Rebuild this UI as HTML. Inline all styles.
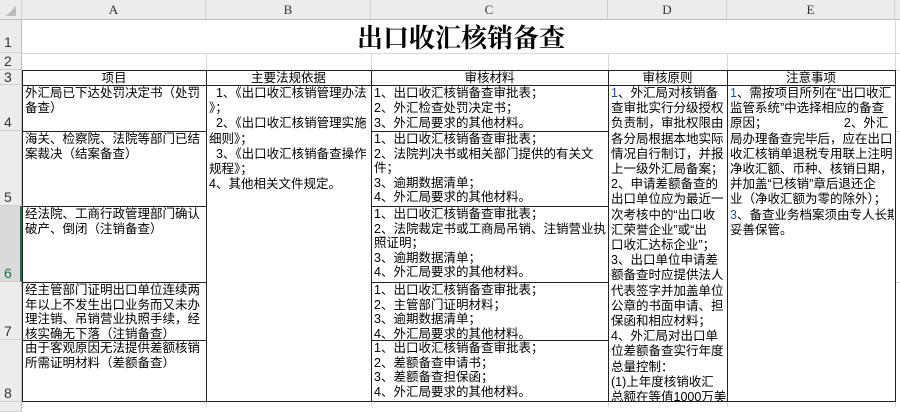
<!DOCTYPE html>
<html><head><meta charset="utf-8"><style>
*{margin:0;padding:0;box-sizing:border-box}
body{width:900px;height:407px;overflow:hidden;background:#fff;position:relative;font-family:"Liberation Serif","Noto Sans CJK SC",sans-serif;font-size:12.5px;color:#000}
.a{position:absolute}
.hl{position:absolute;background:#d9d9d9}
.bl{position:absolute;background:#222}
.ch{position:absolute;top:0;height:20px;background:#ececec;border-right:1px solid #cfcfcf;border-bottom:1px solid #bdbdbd;text-align:center;line-height:20px;font-size:13px;color:#333;font-family:"Liberation Serif",serif}
.rh{position:absolute;left:0;width:22px;background:#ececec;border-bottom:1px solid #cfcfcf;border-right:1px solid #bdbdbd;font-size:14px;color:#333;padding-left:4px;font-family:"Liberation Sans",sans-serif}
.t{position:absolute;line-height:14.6px;overflow:hidden;white-space:nowrap;font-family:"Liberation Sans","Noto Sans CJK SC",sans-serif;font-size:12.5px}
</style></head><body>
<div class="ch" style="left:0;width:22px;background:#ececec"></div>
<div class="a" style="left:6px;top:6px;width:0;height:0;border-left:10px solid transparent;border-bottom:10px solid #bcbcbc"></div>
<div class="ch" style="left:22px;width:184px">A</div>
<div class="ch" style="left:206px;width:165px">B</div>
<div class="ch" style="left:371px;width:237px">C</div>
<div class="ch" style="left:608px;width:119px">D</div>
<div class="ch" style="left:727px;width:168px">E</div>
<div class="ch" style="left:895px;width:10px;border-right:none"></div>
<div class="rh" style="top:20px;height:33px;padding-top:14px;line-height:17px">1</div>
<div class="rh" style="top:53px;height:17px;line-height:17px">2</div>
<div class="rh" style="top:70px;height:15px;line-height:14px">3</div>
<div class="rh" style="top:85px;height:46px;padding-top:29px;line-height:17px">4</div>
<div class="rh" style="top:131px;height:75px;padding-top:58px;line-height:17px">5</div>
<div class="rh" style="top:206px;height:76px;padding-top:59px;line-height:17px;background:#dadada;color:#217346;border-right:2px solid #217346">6</div>
<div class="rh" style="top:282px;height:58px;padding-top:41px;line-height:17px">7</div>
<div class="rh" style="top:340px;height:62px;padding-top:45px;line-height:17px">8</div>
<div class="rh" style="top:402px;height:10px"></div>
<div class="hl" style="left:22px;top:53px;width:878px;height:1px"></div>
<div class="hl" style="left:22px;top:70px;width:878px;height:1px"></div>
<div class="hl" style="left:206px;top:53px;width:1px;height:17px"></div>
<div class="hl" style="left:371px;top:53px;width:1px;height:17px"></div>
<div class="hl" style="left:608px;top:53px;width:1px;height:17px"></div>
<div class="hl" style="left:727px;top:53px;width:1px;height:17px"></div>
<div class="hl" style="left:895px;top:20px;width:1px;height:50px"></div>
<div class="hl" style="left:206px;top:402px;width:1px;height:5px"></div>
<div class="hl" style="left:371px;top:402px;width:1px;height:5px"></div>
<div class="hl" style="left:608px;top:402px;width:1px;height:5px"></div>
<div class="hl" style="left:727px;top:402px;width:1px;height:5px"></div>
<div class="hl" style="left:895px;top:402px;width:1px;height:5px"></div>
<div class="hl" style="left:896px;top:131px;width:4px;height:1px"></div>
<div class="hl" style="left:896px;top:282px;width:4px;height:1px"></div>
<div class="a" style="left:22px;top:20px;width:878px;height:33px;text-align:center;line-height:33px;font-family:'Noto Serif CJK SC',serif;font-size:26px;font-weight:bold;padding-left:0px;letter-spacing:0px">出口收汇核销备查</div>
<div class="bl" style="left:22px;top:70px;width:874px;height:1px"></div>
<div class="bl" style="left:22px;top:85px;width:874px;height:1px"></div>
<div class="bl" style="left:22px;top:401px;width:874px;height:1px"></div>
<div class="bl" style="left:22px;top:70px;width:1px;height:332px"></div>
<div class="bl" style="left:206px;top:70px;width:1px;height:332px"></div>
<div class="bl" style="left:371px;top:70px;width:1px;height:332px"></div>
<div class="bl" style="left:608px;top:70px;width:1px;height:332px"></div>
<div class="bl" style="left:727px;top:70px;width:1px;height:332px"></div>
<div class="bl" style="left:895px;top:70px;width:1px;height:332px"></div>
<div class="bl" style="left:22px;top:131px;width:184px;height:1px"></div>
<div class="bl" style="left:22px;top:206px;width:184px;height:1px"></div>
<div class="bl" style="left:22px;top:282px;width:184px;height:1px"></div>
<div class="bl" style="left:22px;top:340px;width:184px;height:1px"></div>
<div class="bl" style="left:371px;top:131px;width:237px;height:1px"></div>
<div class="bl" style="left:371px;top:206px;width:237px;height:1px"></div>
<div class="bl" style="left:371px;top:282px;width:237px;height:1px"></div>
<div class="bl" style="left:371px;top:340px;width:237px;height:1px"></div>
<div class="t" style="left:22px;top:70px;width:184px;text-align:center;line-height:16px">项目</div>
<div class="t" style="left:206px;top:70px;width:165px;text-align:center;line-height:16px">主要法规依据</div>
<div class="t" style="left:371px;top:70px;width:237px;text-align:center;line-height:16px">审核材料</div>
<div class="t" style="left:608px;top:70px;width:119px;text-align:center;line-height:16px">审核原则</div>
<div class="t" style="left:727px;top:70px;width:168px;text-align:center;line-height:16px">注意事项</div>
<div class="t" style="left:25px;top:86px;width:180px">外汇局已下达处罚决定书（处罚<br>备查）</div>
<div class="t" style="left:25px;top:132px;width:180px">海关、检察院、法院等部门已结<br>案裁决（结案备查）</div>
<div class="t" style="left:25px;top:207px;width:180px">经法院、工商行政管理部门确认<br>破产、倒闭（注销备查）</div>
<div class="t" style="left:25px;top:283px;width:180px;height:57px">经主管部门证明出口单位连续两<br>年以上不发生出口业务而又未办<br>理注销、吊销营业执照手续，经<br>核实确无下落（注销备查）</div>
<div class="t" style="left:25px;top:341px;width:180px">由于客观原因无法提供差额核销<br>所需证明材料（差额备查）</div>
<div class="t" style="left:209px;top:86px;width:161px;line-height:15.2px">&nbsp;&nbsp;1、《出口收汇核销管理办法<br>》；<br>&nbsp;&nbsp;2、《出口收汇核销管理实施<br>细则》；<br>&nbsp;&nbsp;3、《出口收汇核销备查操作<br>规程》；<br>4、其他相关文件规定。</div>
<div class="t" style="left:374px;top:86px;width:233px;height:45px;line-height:15px">1、出口收汇核销备查审批表；<br>2、外汇检查处罚决定书；<br>3、外汇局要求的其他材料。</div>
<div class="t" style="left:374px;top:132px;width:233px;height:74px">1、出口收汇核销备查审批表；<br>2、法院判决书或相关部门提供的有关文<br>件；<br>3、逾期数据清单；<br>4、外汇局要求的其他材料。</div>
<div class="t" style="left:374px;top:207px;width:233px;height:75px">1、出口收汇核销备查审批表；<br>2、法院裁定书或工商局吊销、注销营业执<br>照证明；<br>3、逾期数据清单；<br>4、外汇局要求的其他材料。</div>
<div class="t" style="left:374px;top:283px;width:233px;height:57px">1、出口收汇核销备查审批表；<br>2、主管部门证明材料；<br>3、逾期数据清单；<br>4、外汇局要求的其他材料。</div>
<div class="t" style="left:374px;top:341px;width:233px;height:60px">1、出口收汇核销备查审批表；<br>2、差额备查申请书；<br>3、差额备查担保函；<br>4、外汇局要求的其他材料。</div>
<div class="t" style="left:611px;top:86px;width:115px;height:315px;line-height:15.2px"><span style="color:#1f4e9a">1</span>、外汇局对核销备<br>查审批实行分级授权<br>负责制，审批权限由<br>各分局根据本地实际<br>情况自行制订，并报<br>上一级外汇局备案；<br>2、申请差额备查的<br>出口单位应为最近一<br>次考核中的“出口收<br>汇荣誉企业”或“出<br>口收汇达标企业”；<br>3、出口单位申请差<br>额备查时应提供法人<br>代表签字并加盖单位<br>公章的书面申请、担<br>保函和相应材料；<br>4、外汇局对出口单<br>位差额备查实行年度<br>总量控制：<br>(1)上年度核销收汇<br>总额在等值1000万美</div>
<div class="t" style="left:730px;top:86px;width:164px;line-height:15.2px"><span style="color:#1f4e9a">1</span>、需按项目所列在“出口收汇<br>监管系统”中选择相应的备查<br>原因；&nbsp;&nbsp;&nbsp;&nbsp;&nbsp;&nbsp;&nbsp;&nbsp;&nbsp;&nbsp;&nbsp;&nbsp;&nbsp;&nbsp;&nbsp;&nbsp;&nbsp;&nbsp;&nbsp;&nbsp;&nbsp;&nbsp;2、外汇<br>局办理备查完毕后，应在出口<br>收汇核销单退税专用联上注明<br>净收汇额、币种、核销日期，<br>并加盖“已核销”章后退还企<br>业（净收汇额为零的除外）；<br><span style="color:#1f4e9a">3</span>、备查业务档案须由专人长期<br>妥善保管。</div>
</body></html>
